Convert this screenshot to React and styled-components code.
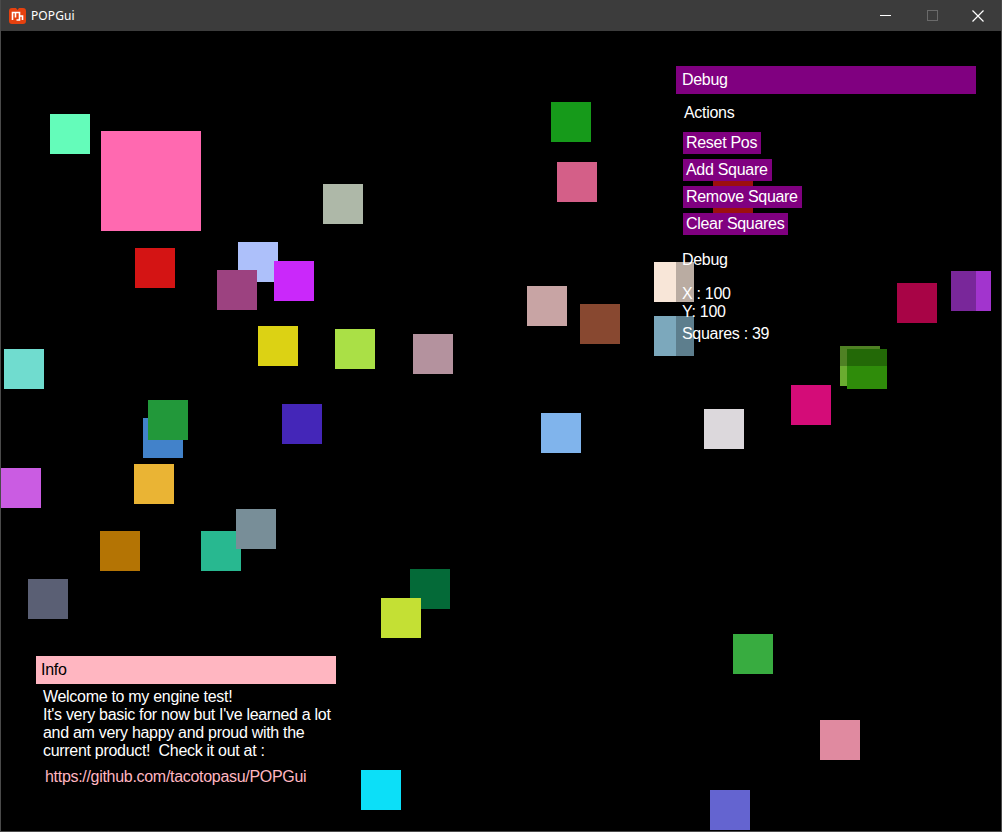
import React from "react";
import styled, { createGlobalStyle } from "styled-components";

const Global = createGlobalStyle`
  html, body { margin: 0; padding: 0; background: #000; }
  body { font-family: "Liberation Sans", Arial, sans-serif; }
`;

const Window = styled.div`
  width: 1002px;
  height: 832px;
  box-sizing: border-box;
  border: 1px solid #4a4a4a;
  border-top: none;
  display: flex;
  flex-direction: column;
  background: #000;
  overflow: hidden;
`;

const TitleBar = styled.div`
  height: 31px;
  flex: none;
  background: #3c3c3c;
  display: flex;
  align-items: center;
  color: #fff;
  font-family: "Noto Sans", "Open Sans", sans-serif;
  font-size: 12px;
`;

const AppIcon = styled.svg`
  margin-left: 8px;
  margin-right: 5px;
  flex: none;
`;

const Title = styled.span`
  flex: 1;
  letter-spacing: 0.1px;
`;

const Controls = styled.div`
  display: flex;
  height: 100%;
`;

const Ctrl = styled.div`
  width: 46px;
  height: 100%;
  display: flex;
  align-items: center;
  justify-content: center;
`;

const Canvas = styled.div`
  position: relative;
  flex: 1;
  background: #000;
  overflow: hidden;
`;

const Square = styled.div`
  position: absolute;
  width: ${(p) => p.$size}px;
  height: ${(p) => p.$size}px;
`;

const Panel = styled.div`
  position: absolute;
  left: ${(p) => p.$x}px;
  top: ${(p) => p.$y}px;
  width: 300px;
  display: flex;
  flex-direction: column;
  font-size: 16px;
  color: #fff;
  letter-spacing: -0.3px;
`;

const PanelHeader = styled.div`
  height: 28px;
  line-height: 28px;
  background: ${(p) => p.$bg};
  color: ${(p) => p.$fg};
  padding-left: ${(p) => p.$pad}px;
`;

const PanelBody = styled.div`
  height: ${(p) => p.$h}px;
  background: ${(p) => p.$shade};
  display: flex;
  flex-direction: column;
  align-items: flex-start;
`;

const Text = styled.div`
  line-height: 18px;
  white-space: pre;
  margin-left: ${(p) => p.$ml || 0}px;
  margin-top: ${(p) => p.$mt || 0}px;
  color: ${(p) => p.$color || "#fff"};
`;

const ButtonList = styled.div`
  display: flex;
  flex-direction: column;
  align-items: flex-start;
  gap: 5px;
  margin-left: 7px;
  margin-top: 10px;
`;

const Button = styled.div`
  height: 22px;
  line-height: 22px;
  padding: 0 4px 0 3px;
  background: #800080;
  color: #fff;
  white-space: pre;
`;

const squares = [
  { x: 135, y: 248, c: "#d41414" },
  { x: 50, y: 114, c: "#64fcba" },
  { x: 551, y: 102, c: "#169a1a" },
  { x: 557, y: 162, c: "#d45f88" },
  { x: 323, y: 184, c: "#aeb8a8" },
  { x: 238, y: 242, c: "#adc0fa" },
  { x: 217, y: 270, c: "#9c4280" },
  { x: 274, y: 261, c: "#ca28fa" },
  { x: 258, y: 326, c: "#dcd214" },
  { x: 335, y: 329, c: "#aae046" },
  { x: 413, y: 334, c: "#b4929e" },
  { x: 4, y: 349, c: "#70dccf" },
  { x: 143, y: 418, c: "#4282ca" },
  { x: 148, y: 400, c: "#22983a" },
  { x: 282, y: 404, c: "#4426b8" },
  { x: 1, y: 468, c: "#ca5ce2" },
  { x: 134, y: 464, c: "#eab434" },
  { x: 100, y: 531, c: "#b47404" },
  { x: 201, y: 531, c: "#28b890" },
  { x: 236, y: 509, c: "#788e98" },
  { x: 28, y: 579, c: "#5a5f74" },
  { x: 410, y: 569, c: "#046a38" },
  { x: 381, y: 598, c: "#c4e034" },
  { x: 527, y: 286, c: "#c8a4a4" },
  { x: 580, y: 304, c: "#884830" },
  { x: 654, y: 262, c: "#f8e6d8" },
  { x: 654, y: 316, c: "#7ca8bc" },
  { x: 541, y: 413, c: "#80b4ec" },
  { x: 704, y: 409, c: "#dcd8dc" },
  { x: 791, y: 385, c: "#d40c78" },
  { x: 897, y: 283, c: "#e0065e" },
  { x: 951, y: 271, c: "#a234ce" },
  { x: 840, y: 346, c: "#6aac30" },
  { x: 847, y: 349, c: "#2f8c0a" },
  { x: 713, y: 180, c: "#d01414" },
  { x: 733, y: 634, c: "#38ac40" },
  { x: 820, y: 720, c: "#e08aa0" },
  { x: 710, y: 790, c: "#6464d0" },
  { x: 361, y: 770, c: "#0cdff8" },
];

const player = { x: 101, y: 131, c: "#ff69b0" };
const OX = 1;
const OY = 31;

const infoLines = [
  "Welcome to my engine test!",
  "It's very basic for now but I've learned a lot",
  "and am very happy and proud with the",
  "current product!  Check it out at :",
];

export default function App() {
  return (
    <>
      <Global />
      <Window>
        <TitleBar>
          <AppIcon width="17" height="18" viewBox="0 0 17 18">
            <path
              d="M3 1h4l1.5 2L10 1h4a3 3 0 0 1 3 3v10a3 3 0 0 1-3 3H3a3 3 0 0 1-3-3V4a3 3 0 0 1 3-3z"
              fill="#e5410f"
            />
            <path
              d="M3.5 13V5.5h3v5M6.5 10.5V5.5h4v7.5h-3M10.5 9h3v4"
              fill="none"
              stroke="#fff"
              strokeWidth="1.6"
            />
          </AppIcon>
          <Title>POPGui</Title>
          <Controls>
            <Ctrl>
              <svg width="12" height="2" viewBox="0 0 12 2">
                <rect x="0" y="0" width="11" height="1" fill="#fff" />
              </svg>
            </Ctrl>
            <Ctrl>
              <svg width="11" height="11" viewBox="0 0 11 11">
                <rect x="0.5" y="0.5" width="10" height="10" fill="none" stroke="#6a6a6a" />
              </svg>
            </Ctrl>
            <Ctrl>
              <svg width="12" height="12" viewBox="0 0 12 12">
                <path d="M0.5 0.5l11 11M11.5 0.5l-11 11" stroke="#fff" strokeWidth="1.2" />
              </svg>
            </Ctrl>
          </Controls>
        </TitleBar>
        <Canvas>
          {squares.map((s, i) => (
            <Square
              key={i}
              $size={40}
              style={{ left: s.x - OX, top: s.y - OY, background: s.c }}
            />
          ))}
          <Square
            $size={100}
            style={{ left: player.x - OX, top: player.y - OY, background: player.c }}
          />

          <Panel $x={675} $y={35}>
            <PanelHeader $bg="#800080" $fg="#fff" $pad={6}>
              Debug
            </PanelHeader>
            <PanelBody $h={272} $shade="rgba(0,0,0,0.25)">
              <Text $ml={8} $mt={10}>Actions</Text>
              <ButtonList>
                <Button>Reset Pos</Button>
                <Button>Add Square</Button>
                <Button>Remove Square</Button>
                <Button>Clear Squares</Button>
              </ButtonList>
              <Text $ml={6} $mt={16}>Debug</Text>
              <Text $ml={6} $mt={16}>X : 100</Text>
              <Text $ml={6}>Y: 100</Text>
              <Text $ml={6} $mt={4}>Squares : 39</Text>
            </PanelBody>
          </Panel>

          <Panel $x={35} $y={625}>
            <PanelHeader $bg="#ffb6c1" $fg="#000" $pad={5}>
              Info
            </PanelHeader>
            <PanelBody $h={160} $shade="transparent">
              <Text $ml={7} $mt={4}>{infoLines.join("\n")}</Text>
              <Text $ml={9} $mt={8} $color="#ffb6c1">
                https://github.com/tacotopasu/POPGui
              </Text>
            </PanelBody>
          </Panel>
        </Canvas>
      </Window>
    </>
  );
}
